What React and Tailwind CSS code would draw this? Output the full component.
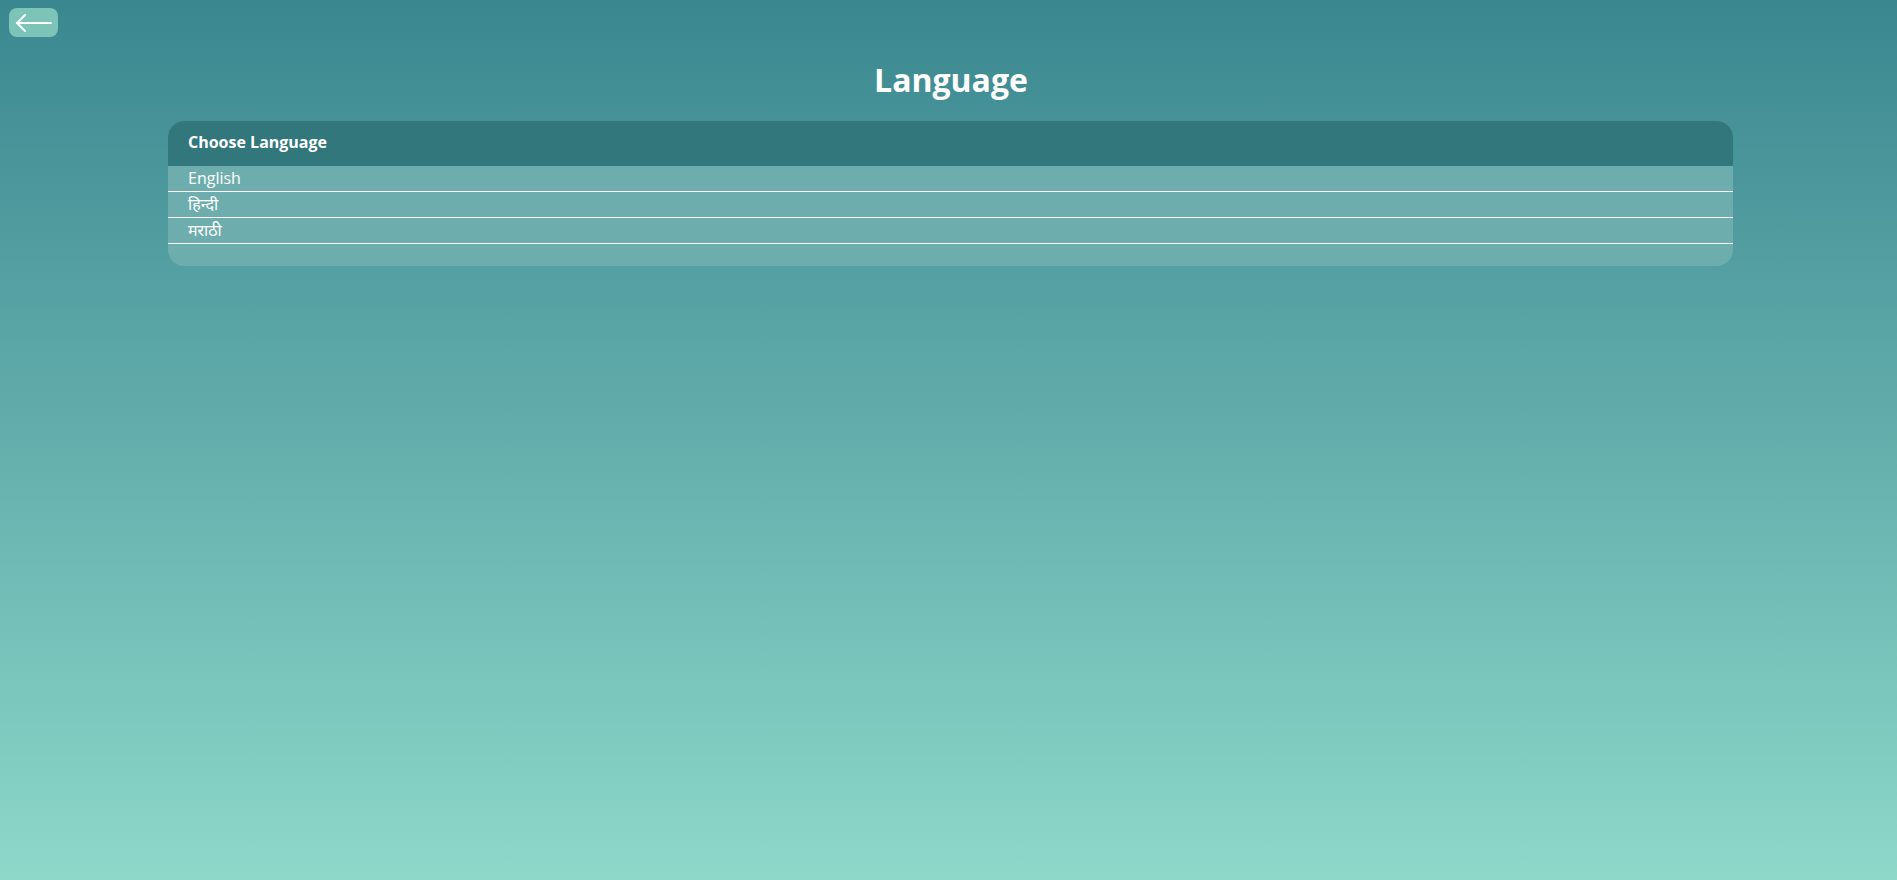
import React from "react";

const languages = ["English", "हिन्दी", "मराठी"];

export default function App() {
  return (
    <div
      className="min-h-screen w-full bg-gradient-to-b from-[#3a8790] to-[#8dd8c9] text-white"
      style={{ fontFamily: '"Open Sans", "Noto Sans", sans-serif' }}
    >
      {/* back button */}
      <div className="pt-2 pl-[9px]">
        <button className="flex h-[29px] w-[49px] items-center justify-center rounded-lg bg-[#7cc4b8]">
          <svg width="38" height="20" viewBox="0 0 38 20" fill="none" stroke="white" strokeWidth="2" strokeLinecap="round">
            <path d="M2 10 H36" />
            <path d="M10 2 L2 10 L10 18" />
          </svg>
        </button>
      </div>

      <h1 className="mt-[23px] pl-[5px] text-center text-[32px] font-bold leading-[40px]">Language</h1>

      <div className="mt-[21px] pl-[168px]">
        <div className="w-[1565px] overflow-hidden rounded-2xl bg-[#6eadae] pb-[22px]">
          <div className="flex h-[45px] items-center bg-[#31777c] px-5 pb-1 text-base font-bold">
            Choose Language
          </div>
          {languages.map((lang) => (
            <div key={lang} className="h-[26px] border-b border-white px-5 text-base leading-[24px]">
              {lang}
            </div>
          ))}
        </div>
      </div>
    </div>
  );
}
